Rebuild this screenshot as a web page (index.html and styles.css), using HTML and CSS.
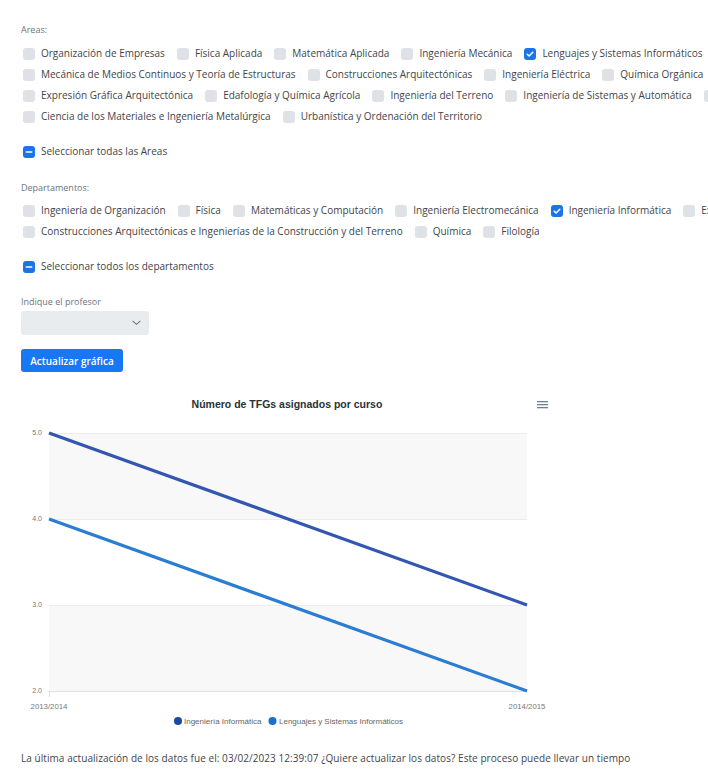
FILE: index.html
```html
<!DOCTYPE html>
<html lang="es">
<head>
<meta charset="utf-8">
<title>TFGs</title>
<link rel="stylesheet" href="styles.css">
</head>
<body>
<div class="page">
  <div class="group-label">Areas:</div>
  <div class="checks">
    <div class="row">
      <label class="item"><span class="box"></span>Organización de Empresas</label>
      <label class="item"><span class="box"></span>Física Aplicada</label>
      <label class="item"><span class="box"></span>Matemática Aplicada</label>
      <label class="item"><span class="box"></span>Ingeniería Mecánica</label>
      <label class="item"><span class="box checked"><svg viewBox="0 0 12 12"><path d="M3.2 6.2 5.1 8 8.8 4.2" fill="none" stroke="#fff" stroke-width="1.5" stroke-linecap="round" stroke-linejoin="round"/></svg></span>Lenguajes y Sistemas Informáticos</label>
    </div>
    <div class="row">
      <label class="item"><span class="box"></span>Mecánica de Medios Continuos y Teoría de Estructuras</label>
      <label class="item"><span class="box"></span>Construcciones Arquitectónicas</label>
      <label class="item"><span class="box"></span>Ingeniería Eléctrica</label>
      <label class="item"><span class="box"></span>Química Orgánica</label>
    </div>
    <div class="row">
      <label class="item"><span class="box"></span>Expresión Gráfica Arquitectónica</label>
      <label class="item"><span class="box"></span>Edafología y Química Agrícola</label>
      <label class="item"><span class="box"></span>Ingeniería del Terreno</label>
      <label class="item"><span class="box"></span>Ingeniería de Sistemas y Automática</label>
      <label class="item"><span class="box"></span>Ingeniería Química</label>
    </div>
    <div class="row">
      <label class="item"><span class="box"></span>Ciencia de los Materiales e Ingeniería Metalúrgica</label>
      <label class="item"><span class="box"></span>Urbanística y Ordenación del Territorio</label>
    </div>
  </div>
  <label class="item select-all"><span class="box checked"><svg viewBox="0 0 12 12"><path d="M3.3 6h5.4" stroke="#fff" stroke-width="1.6" stroke-linecap="round"/></svg></span>Seleccionar todas las Areas</label>

  <div class="group-label dept-label">Departamentos:</div>
  <div class="checks dept-checks">
    <div class="row">
      <label class="item"><span class="box"></span>Ingeniería de Organización</label>
      <label class="item"><span class="box"></span>Física</label>
      <label class="item"><span class="box"></span>Matemáticas y Computación</label>
      <label class="item"><span class="box"></span>Ingeniería Electromecánica</label>
      <label class="item"><span class="box checked"><svg viewBox="0 0 12 12"><path d="M3.2 6.2 5.1 8 8.8 4.2" fill="none" stroke="#fff" stroke-width="1.5" stroke-linecap="round" stroke-linejoin="round"/></svg></span>Ingeniería Informática</label>
      <label class="item"><span class="box"></span>Expresión Gráfica</label>
    </div>
    <div class="row">
      <label class="item"><span class="box"></span>Construcciones Arquitectónicas e Ingenierías de la Construcción y del Terreno</label>
      <label class="item"><span class="box"></span>Química</label>
      <label class="item"><span class="box"></span>Filología</label>
    </div>
  </div>
  <label class="item select-all"><span class="box checked"><svg viewBox="0 0 12 12"><path d="M3.3 6h5.4" stroke="#fff" stroke-width="1.6" stroke-linecap="round"/></svg></span>Seleccionar todos los departamentos</label>

  <div class="field-label">Indique el profesor</div>
  <div class="select"><svg class="chev" viewBox="0 0 10 6"><path d="M1 1l4 3.6L9 1" fill="none" stroke="#6c757d" stroke-width="1.2" stroke-linecap="round" stroke-linejoin="round"/></svg></div>
  <button class="btn" type="button">Actualizar gráfica</button>

  <div class="chart">
    <svg width="540" height="345" viewBox="0 0 540 345">
      <text x="266" y="18" class="c-title" text-anchor="middle">Número de TFGs asignados por curso</text>
      <g class="menu" fill="#6e8192">
        <rect x="516" y="11" width="11" height="1.3"/>
        <rect x="516" y="14" width="11" height="1.3"/>
        <rect x="516" y="17" width="11" height="1.3"/>
      </g>
      <rect x="28" y="43" width="478" height="86" fill="#f8f8f8"/>
      <rect x="28" y="215" width="478" height="86" fill="#f8f8f8"/>
      <g stroke="#ececec" stroke-width="1">
        <line x1="28" y1="43.5" x2="506" y2="43.5"/>
        <line x1="28" y1="129.5" x2="506" y2="129.5"/>
        <line x1="28" y1="215.5" x2="506" y2="215.5"/>
      </g>
      <line x1="27" y1="301.5" x2="506" y2="301.5" stroke="#e0e0e0"/>
      <line x1="28.5" y1="301" x2="28.5" y2="307" stroke="#e0e0e0"/>
      <g class="c-axis" text-anchor="end">
        <text x="21" y="45">5.0</text>
        <text x="21" y="131">4.0</text>
        <text x="21" y="217">3.0</text>
        <text x="21" y="303">2.0</text>
      </g>
      <g class="c-xaxis" text-anchor="middle">
        <text x="28" y="319">2013/2014</text>
        <text x="506" y="319">2014/2015</text>
      </g>
      <line x1="28" y1="43" x2="506" y2="215" stroke="#3356b0" stroke-width="3.2" stroke-linecap="butt"/>
      <line x1="28" y1="129" x2="506" y2="301" stroke="#2b7dd2" stroke-width="3.2" stroke-linecap="butt"/>
      <circle cx="157" cy="331" r="4" fill="#1c48a6"/>
      <text x="163" y="334" class="c-legend">Ingeniería Informática</text>
      <circle cx="251.5" cy="331" r="4" fill="#1a6fd0"/>
      <text x="258" y="334" class="c-legend">Lenguajes y Sistemas Informáticos</text>
    </svg>
  </div>

  <p class="footer-text">La última actualización de los datos fue el: 03/02/2023 12:39:07 ¿Quiere actualizar los datos? Este proceso puede llevar un tiempo</p>
</div>
</body>
</html>
```

FILE: styles.css
```css
html, body {
  margin: 0;
  padding: 0;
  background: #fff;
  overflow: hidden;
}
.page {
  padding: 23px 0 0 21px;
  font-family: "Open Sans", "Noto Sans", sans-serif;
  font-size: 10px;
  color: #3f444a;
  width: 900px;
}
.group-label {
  font-size: 9px;
  line-height: 14px;
  color: #6c757d;
}
.checks {
  margin-top: 6px;
}
.row {
  display: flex;
  flex-wrap: nowrap;
  gap: 12px;
  height: 21px;
  align-items: center;
  white-space: nowrap;
  padding-left: 2px;
}
.item {
  display: inline-flex;
  align-items: center;
  gap: 6px;
  line-height: 21px;
  white-space: nowrap;
}
.box {
  display: inline-block;
  width: 12px;
  height: 12px;
  border-radius: 3px;
  background: #dee2e6;
  flex: none;
}
.box svg {
  display: block;
  width: 12px;
  height: 12px;
}
.box.checked {
  background: #1b74e8;
}
.select-all {
  display: flex;
  margin-top: 14px;
  padding-left: 2px;
}
.dept-label {
  margin-top: 19px;
}
.dept-checks {
  margin-top: 5px;
}
.field-label {
  margin-top: 18px;
  font-size: 9px;
  line-height: 14px;
  color: #6c757d;
}
.select {
  margin-top: 2px;
  width: 128px;
  height: 24px;
  border-radius: 3px;
  background: #e9ecef;
  position: relative;
}
.chev {
  position: absolute;
  right: 8px;
  top: 9px;
  width: 9px;
  height: 6px;
}
.btn {
  display: block;
  margin-top: 14px;
  width: 102px;
  height: 23px;
  border: none;
  border-radius: 3px;
  background: #1877f2;
  color: #fff;
  font-family: "Open Sans", "Noto Sans", sans-serif;
  font-weight: 600;
  font-size: 10px;
  padding: 0;
}
.chart {
  margin-top: 18px;
  height: 345px;
}
.chart svg {
  display: block;
}
.c-title {
  font-family: "Liberation Sans", Arial, sans-serif;
  font-weight: bold;
  font-size: 10.5px;
  fill: #263238;
}
.c-axis {
  font-family: "Liberation Sans", Arial, sans-serif;
  font-size: 7px;
  fill: #777;
}
.c-xaxis {
  font-family: "Liberation Sans", Arial, sans-serif;
  font-size: 7.8px;
  fill: #777;
}
.c-legend {
  font-family: "Liberation Sans", Arial, sans-serif;
  font-size: 8px;
  fill: #666;
}
.footer-text {
  margin: 15px 0 0;
  line-height: 16px;
  font-size: 10px;
  letter-spacing: 0.06px;
}
```
